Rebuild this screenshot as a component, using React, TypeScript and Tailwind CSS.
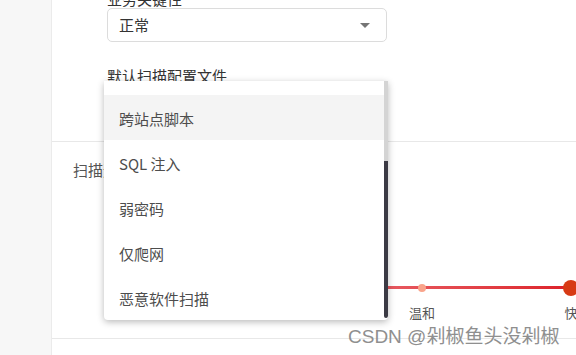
const font = { fontFamily: '"Noto Sans CJK SC", "Noto Sans", sans-serif' };

const options = ['跨站点脚本', 'SQL 注入', '弱密码', '仅爬网', '恶意软件扫描'];

const stops = [
  { label: '最慢', pos: 0 },
  { label: '慢', pos: 33.33 },
  { label: '温和', pos: 66.66 },
  { label: '快', pos: 100 },
];

function Caret() {
  return (
    <svg width="10" height="5" viewBox="0 0 10 5" className="block">
      <path d="M0 0h10L5 5z" fill="#757575" />
    </svg>
  );
}

function SelectBox({ value }: { value: string }) {
  return (
    <div className="w-[280px] h-[34px] border border-[#dcdcdc] rounded-[5px] flex items-center justify-between pl-[11px] pr-[16px] bg-white">
      <span className="text-[15px] text-[#333]">{value}</span>
      <Caret />
    </div>
  );
}

function Menu() {
  return (
    <div className="absolute left-[52px] top-[81px] w-[284px] h-[239px] bg-white rounded-b-[4px] shadow-[0_2px_7px_rgba(0,0,0,0.28)] overflow-hidden flex">
      <div className="flex-1 flex flex-col">
        <div className="h-[15px]" />
        {options.map((o, i) => (
          <div
            key={o}
            className={
              'h-[45px] shrink-0 flex items-center pt-[4px] pl-[15px] text-[15px] text-[#4d4d4d] ' +
              (i === 0 ? 'bg-[#f4f4f4]' : '')
            }
          >
            {o}
          </div>
        ))}
      </div>
      <div className="w-[4px] flex flex-col">
        <div className="h-[80px] bg-[#d4d4d4]" />
        <div className="flex-1 bg-[#3b3a44] rounded-b-[2px] mb-[2px]" />
      </div>
    </div>
  );
}

function Slider() {
  return (
    <div className="relative ml-[72px] w-[447px] h-[40px]">
      <div className="absolute left-0 right-0 top-[4px] h-[3px] bg-gradient-to-r from-[#f4a9ad] via-[#e9616a] to-[#dd1f29]" />
      {stops.map((s, i) =>
        i === stops.length - 1 ? (
          <div
            key={s.label}
            className="absolute top-[-2px] w-[16px] h-[16px] -ml-[8px] rounded-full bg-[#d73a14]"
            style={{ left: `${s.pos}%` }}
          />
        ) : (
          <div
            key={s.label}
            className="absolute top-[1.5px] w-[8px] h-[8px] -ml-[4px] rounded-full bg-[#f9a48b]"
            style={{ left: `${s.pos}%` }}
          />
        )
      )}
      {stops.map((s) => (
        <div
          key={s.label + 'l'}
          className="absolute top-[22px] -translate-x-1/2 text-[13px] leading-[18px] text-[#555] whitespace-nowrap"
          style={{ left: `${s.pos}%` }}
        >
          {s.label}
        </div>
      ))}
    </div>
  );
}

export default function App() {
  return (
    <div className="w-[576px] h-[355px] overflow-hidden flex bg-white" style={font}>
      <div className="w-[52px] shrink-0 bg-[#f7f7f7] border-r border-[#ebebeb]" />
      <div className="relative flex-1 flex flex-col">
        <div className="-mt-[10px] pl-[55px] pb-[19px] border-b border-[#e8e8e8]">
          <div className="text-[15px] leading-[18px] text-[#333]">业务关键性</div>
          <SelectBox value="正常" />
          <div className="mt-[24px] text-[15px] leading-[20px] text-[#333]">默认扫描配置文件</div>
          <div className="mt-[2px]">
            <SelectBox value="跨站点脚本" />
          </div>
        </div>
        <div className="pt-[18px] h-[197px] border-b border-[#e8e8e8]">
          <div className="pl-[21px] text-[15px] leading-[20px] text-[#555]">扫描速度</div>
          <div className="mt-[102px]">
            <Slider />
          </div>
        </div>
        <div className="flex-1" />
        <Menu />
        <div
          className="absolute left-[296px] top-[325px] text-[19px] leading-[24px] text-[#8f8f8f] whitespace-nowrap"
          style={{ fontFamily: '"Liberation Sans", "Noto Sans CJK SC", sans-serif' }}
        >
          CSDN @剁椒鱼头没剁椒
        </div>
      </div>
    </div>
  );
}
